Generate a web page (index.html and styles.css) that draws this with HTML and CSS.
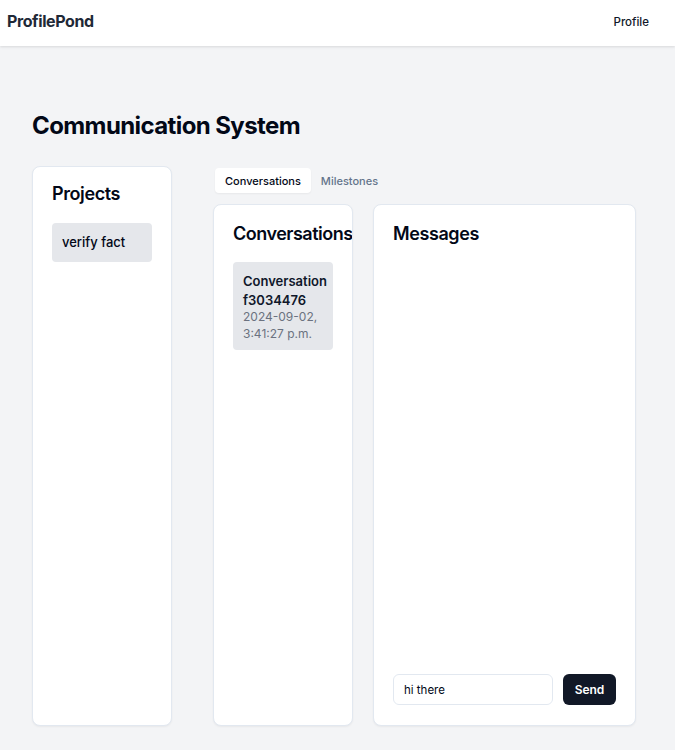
FILE: index.html
```html
<!DOCTYPE html>
<html lang="en">
<head>
<meta charset="utf-8">
<title>ProfilePond</title>
<link rel="stylesheet" href="styles.css">
</head>
<body>
<header class="topbar">
  <div class="brand">ProfilePond</div>
  <nav class="nav"><a class="nav-link" href="#">Profile</a></nav>
</header>
<main class="page">
  <h1 class="page-title">Communication System</h1>
  <div class="layout">
    <section class="card projects">
      <h2 class="card-title">Projects</h2>
      <div class="list-item project-item">verify fact</div>
    </section>
    <div class="workspace">
      <div class="tabs">
        <button class="tab active">Conversations</button>
        <button class="tab">Milestones</button>
      </div>
      <div class="panels">
        <section class="card conversations">
          <h2 class="card-title">Conversations</h2>
          <div class="list-item conv-item">
            <div class="conv-name">Conversation f3034476</div>
            <div class="conv-date">2024-09-02, 3:41:27 p.m.</div>
          </div>
        </section>
        <section class="card messages">
          <h2 class="card-title">Messages</h2>
          <div class="message-list"></div>
          <form class="composer">
            <input class="composer-input" type="text" value="hi there">
            <button class="send-btn" type="button">Send</button>
          </form>
        </section>
      </div>
    </div>
  </div>
</main>
</body>
</html>
```

FILE: styles.css
```css
* { box-sizing: border-box; }
html, body { margin: 0; padding: 0; }
body {
  font-family: Inter, "Noto Sans", sans-serif;
  background: #f3f4f6;
  color: #0f172a;
  width: 675px;
  height: 750px;
  overflow: hidden;
}
.topbar {
  height: 46px;
  background: #ffffff;
  box-shadow: 0 1px 3px rgba(0,0,0,0.08), 0 1px 2px rgba(0,0,0,0.04);
  display: flex;
  align-items: center;
  justify-content: space-between;
  padding: 0 26px 4px 7px;
  position: relative;
  z-index: 1;
}
.brand {
  font-size: 16px;
  font-weight: 700;
  color: #1f2937;
  letter-spacing: -0.4px;
}
.nav { padding-bottom: 2px; }
.nav-link {
  font-size: 11.5px;
  font-weight: 500;
  color: #0f172a;
  text-decoration: none;
}
.page {
  padding: 64px 40px 24px 32px;
}
.page-title {
  margin: 0 0 24px 0;
  font-size: 24px;
  line-height: 32px;
  font-weight: 700;
  color: #020817;
  letter-spacing: -0.6px;
}
.layout {
  display: flex;
  gap: 41px;
  height: 560px;
}
.card {
  background: #ffffff;
  border: 1px solid #e2e8f0;
  border-radius: 8px;
  box-shadow: 0 1px 2px rgba(0,0,0,0.05);
  padding: 19px;
  overflow: hidden;
}
.projects {
  width: 140px;
  flex: none;
  padding-top: 13px;
}
.card-title {
  margin: 0 0 15px 0;
  font-size: 18px;
  line-height: 28px;
  font-weight: 600;
  color: #020817;
  letter-spacing: -0.4px;
  white-space: nowrap;
}
.list-item {
  background: #e5e7eb;
  border-radius: 4px;
  padding: 10px;
}
.project-item {
  font-size: 13px;
  line-height: 19px;
  font-weight: 500;
  color: #020817;
}
.workspace {
  flex: 1;
  display: flex;
  flex-direction: column;
}
.tabs {
  display: flex;
  align-items: center;
  padding: 2px;
  height: 29px;
  margin-bottom: 9px;
}
.tab {
  font-family: inherit;
  border: 0;
  background: transparent;
  height: 25px;
  padding: 0 10px;
  border-radius: 4px;
  font-size: 11px;
  font-weight: 500;
  color: #64748b;
}
.tab.active {
  background: #ffffff;
  color: #020817;
  box-shadow: 0 1px 2px rgba(0,0,0,0.05);
}
.panels {
  flex: 1;
  display: flex;
  gap: 20px;
}
.conversations {
  width: 140px;
  flex: none;
  padding-top: 15px;
}
.conversations .card-title { margin-bottom: 14px; letter-spacing: -0.5px; }
.conv-item {
  padding: 10px 10px 8px 10px;
}
.conv-name {
  font-size: 13px;
  line-height: 18.5px;
  font-weight: 600;
  color: #0f172a;
}
.conv-date {
  font-size: 12px;
  line-height: 16.5px;
  color: #6b7280;
}
.messages {
  flex: 1;
  display: flex;
  flex-direction: column;
  padding-top: 15px;
  padding-bottom: 20px;
}
.messages .card-title { margin-bottom: 0; }
.message-list { flex: 1; }
.composer {
  display: flex;
  gap: 10px;
  margin: 0;
}
.composer-input {
  width: 160px;
  height: 31px;
  border: 1px solid #e2e8f0;
  border-radius: 6px;
  padding: 0 10px;
  font-family: inherit;
  font-size: 11.5px;
  color: #020817;
  background: #ffffff;
  outline: none;
}
.send-btn {
  width: 53px;
  height: 31px;
  border: 0;
  border-radius: 6px;
  background: #111827;
  color: #ffffff;
  font-family: inherit;
  font-size: 12px;
  font-weight: 600;
}
```
